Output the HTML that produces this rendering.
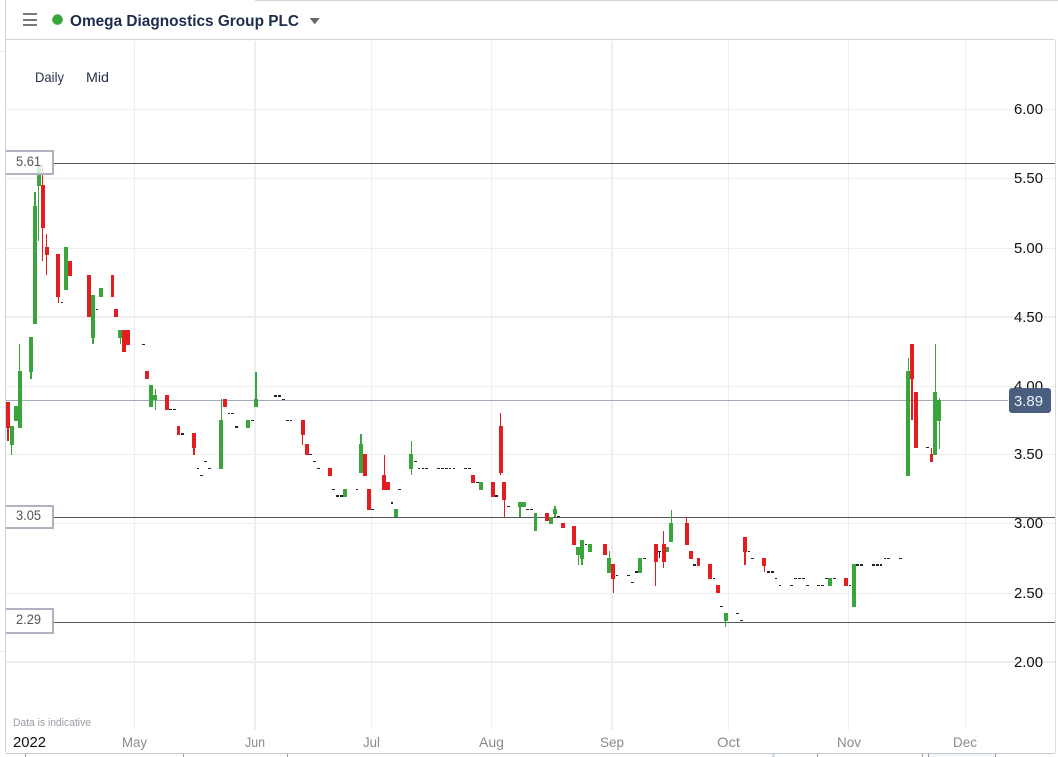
<!DOCTYPE html>
<html>
<head>
<meta charset="utf-8">
<style>
html,body{margin:0;padding:0;background:#fff;width:1058px;height:757px;overflow:hidden}
svg{display:block;font-family:"Liberation Sans",sans-serif}
</style>
</head>
<body>
<svg width="1058" height="757" viewBox="0 0 1058 757" xmlns="http://www.w3.org/2000/svg">
<rect width="1058" height="757" fill="#fff"/>
<g shape-rendering="crispEdges">
<!-- frame -->
<rect x="255" y="0" width="803" height="1" fill="#cfdad8"/>
<rect x="5" y="0" width="1" height="753" fill="#cdd6d6"/>
<rect x="6" y="39" width="1049" height="1" fill="#cdd6d6"/>
<rect x="1055" y="40" width="1" height="713" fill="#d5e0de"/>
<rect x="0" y="51" width="5" height="1" fill="#eee"/>
<rect x="0" y="651" width="5" height="1" fill="#eee"/>
<!-- grid -->
<g fill="#eeeeef">
<rect x="6" y="109" width="1049" height="1"/>
<rect x="6" y="178" width="1049" height="1"/>
<rect x="6" y="248" width="1049" height="1"/>
<rect x="6" y="316" width="1049" height="2"/>
<rect x="6" y="386" width="1049" height="1"/>
<rect x="6" y="454" width="1049" height="1"/>
<rect x="6" y="523" width="1049" height="1"/>
<rect x="6" y="593" width="1049" height="1"/>
<rect x="6" y="661" width="1049" height="2"/>
<rect x="134" y="41" width="1" height="689"/>
<rect x="254" y="41" width="2" height="689"/>
<rect x="371" y="41" width="1" height="689"/>
<rect x="491" y="41" width="1" height="689"/>
<rect x="611" y="41" width="2" height="689"/>
<rect x="728" y="41" width="1" height="689"/>
<rect x="848" y="41" width="1" height="689"/>
<rect x="965" y="41" width="1" height="689"/>
</g>
<!-- bottom axis -->
<rect x="6" y="753" width="1049" height="1" fill="#c4c8d0"/>
<g fill="#9a9eaa">
<rect x="25" y="754" width="1" height="3"/>
<rect x="183" y="754" width="1" height="3"/>
<rect x="287" y="754" width="1" height="3"/>
<rect x="817" y="754" width="1" height="3"/>
<rect x="922" y="754" width="1" height="3"/>
<rect x="928" y="754" width="1" height="3"/>
<rect x="995" y="754" width="1" height="3"/>
</g>
<rect x="772" y="754" width="3" height="3" fill="#cfe2f2"/>
<rect x="929" y="754" width="66" height="3" fill="#f3f6f8"/>
<!-- lines -->
<rect x="6" y="400" width="1002" height="1" fill="#a3abbb"/>
<rect x="54" y="163" width="1001" height="1" fill="#555"/>
<rect x="54" y="517" width="1001" height="1" fill="#555"/>
<rect x="54" y="622" width="1001" height="1" fill="#555"/>
<!-- green candles -->
<path fill="#3aa53c" d="M10 426h4v19h-4zM11 445h1v10h-1zM14 406h4v15h-4zM18 371h4v57h-4zM19 344h1v27h-1zM29 337h4v35h-4zM30 372h2v7h-2zM33 206h4v118h-4zM34 192h2v14h-2zM37 165h4v21h-4zM38 186h1v55h-1zM64 247h4v43h-4zM91 295h4v43h-4zM92 338h2v6h-2zM99 288h4v9h-4zM118 330h4v8h-4zM120 338h1v6h-1zM149 385h4v22h-4zM153 395h4v5h-4zM155 389h1v21h-1zM219 420h4v49h-4zM221 399h1v21h-1zM246 420h4v8h-4zM254 399h4v8h-4zM255 372h2v27h-2zM343 489h4v8h-4zM359 444h4v29h-4zM360 434h2v10h-2zM394 509h4v8h-4zM409 454h4v15h-4zM411 441h1v34h-1zM479 482h4v8h-4zM518 502h8v5h-8zM519 507h2v10h-2zM534 513h3v18h-3zM549 517h4v7h-4zM553 509h4v5h-4zM554 506h2v11h-2zM576 547h4v8h-4zM578 555h1v10h-1zM580 540h4v19h-4zM581 559h2v6h-2zM588 544h4v8h-4zM607 558h4v15h-4zM609 551h1v7h-1zM638 558h4v15h-4zM665 547h4v5h-4zM669 523h4v19h-4zM671 510h1v13h-1zM724 613h4v8h-4zM725 621h1v6h-1zM828 578h4v8h-4zM852 564h4v43h-4zM906 371h4v105h-4zM908 358h1v13h-1zM933 392h4v63h-4zM935 344h1v48h-1zM937 400h4v21h-4zM939 398h1v51h-1z"/>
<!-- red candles -->
<path fill="#e41e20" d="M6 402h4v26h-4zM7 428h2v13h-2zM41 185h4v43h-4zM42 165h1v96h-1zM45 247h4v8h-4zM46 234h1v41h-1zM56 254h4v43h-4zM58 297h1v6h-1zM68 261h4v15h-4zM87 275h4v42h-4zM111 275h3v22h-3zM114 309h4v8h-4zM122 330h4v22h-4zM126 330h4v15h-4zM145 371h4v8h-4zM165 395h4v15h-4zM177 426h3v9h-3zM192 433h4v15h-4zM193 448h2v7h-2zM223 399h4v8h-4zM301 420h4v15h-4zM302 435h1v10h-1zM305 444h4v11h-4zM328 468h4v8h-4zM363 454h4v22h-4zM367 489h4v21h-4zM382 475h4v15h-4zM384 455h1v20h-1zM386 482h4v8h-4zM471 475h4v8h-4zM491 482h4v15h-4zM499 426h4v47h-4zM500 413h1v62h-1zM502 482h4v18h-4zM504 500h1v17h-1zM545 513h4v8h-4zM561 523h4v5h-4zM572 526h4v19h-4zM603 544h4v11h-4zM611 564h4v15h-4zM613 579h1v14h-1zM654 544h4v18h-4zM655 562h1v24h-1zM662 544h4v18h-4zM663 531h1v37h-1zM685 523h4v22h-4zM686 517h1v6h-1zM689 551h4v8h-4zM697 558h3v8h-3zM708 564h4v15h-4zM716 585h4v8h-4zM743 537h4v15h-4zM744 552h2v13h-2zM762 558h4v8h-4zM764 566h1v6h-1zM844 578h4v8h-4zM910 344h4v35h-4zM911 379h2v41h-2zM914 392h4v56h-4zM930 454h3v8h-3zM931 448h1v6h-1z"/>
<!-- ticks -->
<path fill="#222" d="M61 302h2v1h-2zM96 309h2v1h-2zM142 344h3v1h-3zM169 409h3v1h-3zM173 409h3v1h-3zM181 433h3v2h-3zM204 461h3v1h-3zM197 468h2v1h-2zM208 468h3v1h-3zM200 475h3v1h-3zM228 413h2v1h-2zM231 413h3v1h-3zM235 426h3v2h-3zM251 420h3v1h-3zM274 395h3v2h-3zM278 395h3v2h-3zM282 399h3v1h-3zM286 420h3v1h-3zM290 420h2v1h-2zM309 454h3v1h-3zM313 461h3v1h-3zM317 468h3v1h-3zM332 489h3v1h-3zM336 495h3v2h-3zM340 495h3v2h-3zM356 489h2v1h-2zM371 509h3v1h-3zM391 502h2v2h-2zM398 489h3v1h-3zM414 461h3v1h-3zM418 468h2v1h-2zM422 468h2v1h-2zM425 468h3v1h-3zM437 468h3v1h-3zM441 468h3v1h-3zM445 468h3v1h-3zM449 468h2v1h-2zM453 468h2v1h-2zM464 468h3v1h-3zM468 468h3v1h-3zM476 482h3v1h-3zM495 495h3v2h-3zM507 506h3v1h-3zM526 509h3v1h-3zM530 509h3v1h-3zM557 516h3v1h-3zM585 544h2v1h-2zM616 575h2v1h-2zM627 575h3v1h-3zM631 582h3v1h-3zM635 571h3v2h-3zM643 558h3v1h-3zM658 551h3v1h-3zM659 551h1v7h-1zM693 564h3v2h-3zM713 578h2v1h-2zM720 606h3v1h-3zM736 613h3v1h-3zM740 620h3v1h-3zM748 551h2v1h-2zM751 558h3v1h-3zM767 571h3v2h-3zM771 571h3v2h-3zM775 578h2v1h-2zM779 585h2v1h-2zM790 585h3v1h-3zM794 578h3v1h-3zM798 578h3v1h-3zM802 578h3v1h-3zM806 585h3v1h-3zM817 585h3v1h-3zM821 585h3v1h-3zM825 578h3v1h-3zM833 578h3v1h-3zM849 585h2v1h-2zM856 564h3v2h-3zM860 564h3v2h-3zM872 564h3v2h-3zM876 564h3v2h-3zM880 564h2v2h-2zM884 558h2v1h-2zM887 558h3v1h-3zM899 558h3v1h-3zM926 447h3v1h-3z"/>
<!-- left labels -->
<g fill="#fff" fill-opacity=".8">
<rect x="6" y="151" width="46" height="22"/>
<rect x="6" y="506" width="46" height="21"/>
<rect x="6" y="610" width="46" height="22"/>
</g>
<g fill="#b1b1c0">
<rect x="6" y="150" width="48" height="2"/><rect x="52" y="150" width="2" height="25"/><rect x="6" y="173" width="48" height="2"/>
<rect x="6" y="505" width="48" height="2"/><rect x="52" y="505" width="2" height="24"/><rect x="6" y="527" width="48" height="2"/>
<rect x="6" y="608" width="48" height="2"/><rect x="52" y="608" width="2" height="26"/><rect x="6" y="632" width="48" height="2"/>
</g>
<!-- hamburger -->
<g fill="#77777f">
<rect x="23" y="13" width="14" height="2"/>
<rect x="23" y="19" width="14" height="2"/>
<rect x="23" y="24" width="14" height="2"/>
</g>
</g>
<circle cx="57.5" cy="19.6" r="5.3" fill="#3aa53c"/>
<path d="M309.7 18h10l-5 6.2z" fill="#666"/>

<!-- text -->
<text x="70" y="26" font-size="16" font-weight="700" fill="#1c2c4c" textLength="229" lengthAdjust="spacingAndGlyphs">Omega Diagnostics Group PLC</text>
<g font-size="14" fill="#26324a">
<text x="35" y="82" textLength="29" lengthAdjust="spacingAndGlyphs">Daily</text>
<text x="86" y="82" textLength="23" lengthAdjust="spacingAndGlyphs">Mid</text>
</g>
<g font-size="14" fill="#555">
<text x="16" y="166" textLength="25" lengthAdjust="spacingAndGlyphs">5.61</text>
<text x="16" y="520" textLength="25" lengthAdjust="spacingAndGlyphs">3.05</text>
<text x="16" y="624" textLength="25" lengthAdjust="spacingAndGlyphs">2.29</text>
</g>
<g font-size="15" fill="#111">
<text x="1014" y="114" textLength="29" lengthAdjust="spacingAndGlyphs">6.00</text>
<text x="1014" y="183" textLength="29" lengthAdjust="spacingAndGlyphs">5.50</text>
<text x="1014" y="253" textLength="29" lengthAdjust="spacingAndGlyphs">5.00</text>
<text x="1014" y="322" textLength="29" lengthAdjust="spacingAndGlyphs">4.50</text>
<text x="1014" y="391" textLength="29" lengthAdjust="spacingAndGlyphs">4.00</text>
<text x="1014" y="459" textLength="29" lengthAdjust="spacingAndGlyphs">3.50</text>
<text x="1014" y="528" textLength="29" lengthAdjust="spacingAndGlyphs">3.00</text>
<text x="1014" y="598" textLength="29" lengthAdjust="spacingAndGlyphs">2.50</text>
<text x="1014" y="667" textLength="29" lengthAdjust="spacingAndGlyphs">2.00</text>
</g>
<rect x="1009" y="388" width="42" height="25" rx="3" fill="#4a5f80"/>
<text x="1014" y="406" font-size="15" fill="#eef1f6" textLength="29" lengthAdjust="spacingAndGlyphs">3.89</text>
<text x="13" y="726" font-size="11" fill="#9a9aa5" textLength="78" lengthAdjust="spacingAndGlyphs">Data is indicative</text>
<text x="13" y="747" font-size="14.5" fill="#111" textLength="33" lengthAdjust="spacingAndGlyphs">2022</text>
<g font-size="14" fill="#8a8a8a">
<text x="122" y="747" textLength="25" lengthAdjust="spacingAndGlyphs">May</text>
<text x="245" y="747" textLength="20" lengthAdjust="spacingAndGlyphs">Jun</text>
<text x="363" y="747" textLength="17" lengthAdjust="spacingAndGlyphs">Jul</text>
<text x="479" y="747" textLength="25" lengthAdjust="spacingAndGlyphs">Aug</text>
<text x="600" y="747" textLength="24" lengthAdjust="spacingAndGlyphs">Sep</text>
<text x="717" y="747" textLength="23" lengthAdjust="spacingAndGlyphs">Oct</text>
<text x="837" y="747" textLength="24" lengthAdjust="spacingAndGlyphs">Nov</text>
<text x="953" y="747" textLength="24" lengthAdjust="spacingAndGlyphs">Dec</text>
</g>
</svg>
</body>
</html>
